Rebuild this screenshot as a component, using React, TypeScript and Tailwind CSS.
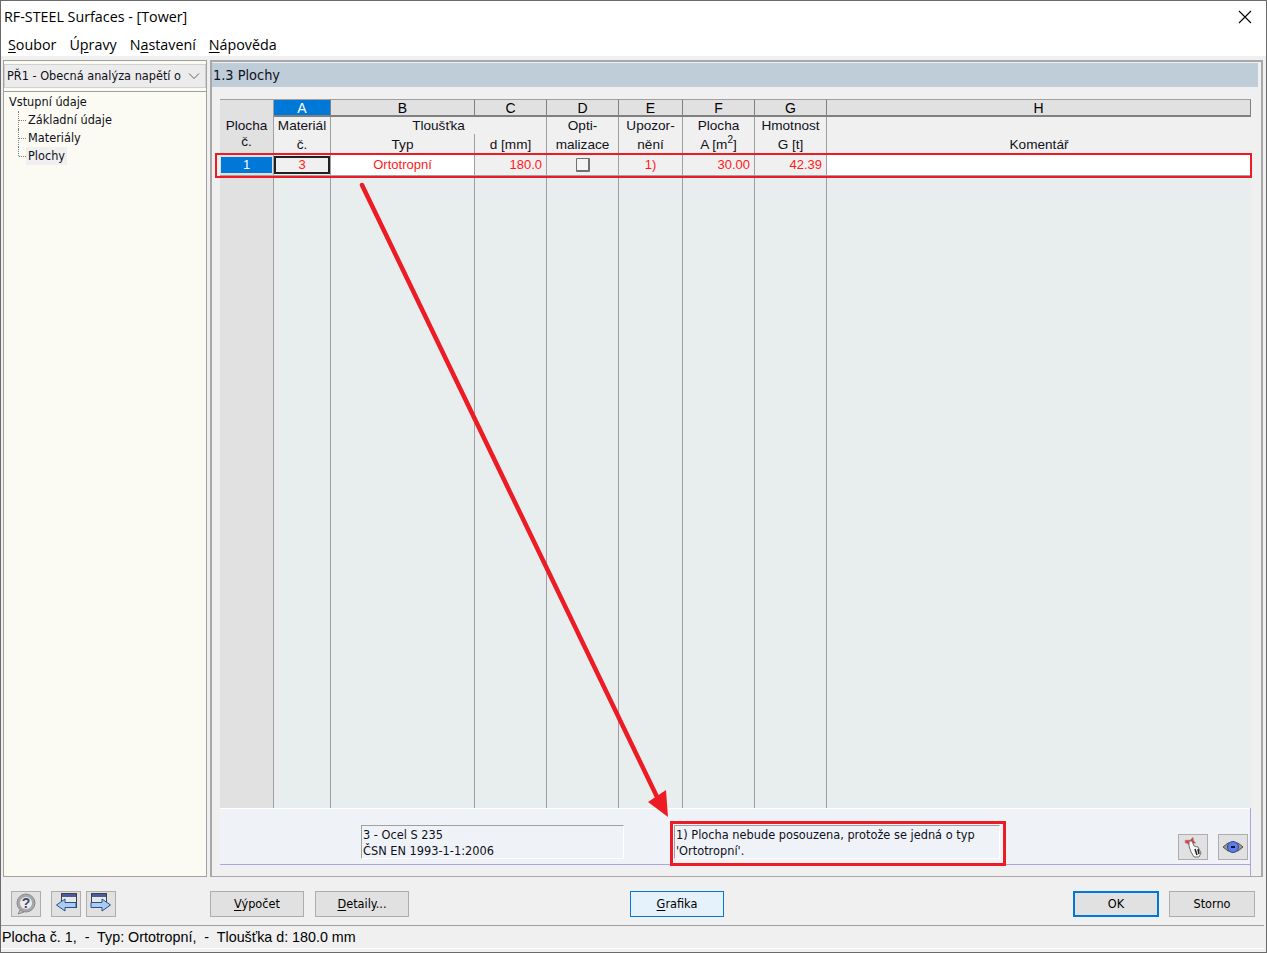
const A = "font-['Liberation_Sans',sans-serif]";
const T = "font-['DejaVu_Sans_Condensed','Noto_Sans',sans-serif]";
const cols = "grid-cols-[54px_57px_144px_72px_72px_64px_72px_72px_424px]";

function U({ children }: { children: string }) {
  return <span className="underline underline-offset-2">{children}</span>;
}

function Letter({ c, active }: { c: string; active?: boolean }) {
  return (
    <div className={`flex h-[18px] items-center justify-center border-t border-r border-b-2 border-t-[#a0a0a0] border-r-[#808080] border-b-[#808080] pt-[2px] text-[14px] ${active ? "bg-[#0078d7] text-white" : "bg-[#e1e1e1] text-black"}`}>
      {c}
    </div>
  );
}

function Head({ children, r = true, cls = "h-[17px]" }: { children?: React.ReactNode; r?: boolean; cls?: string }) {
  return (
    <div className={`flex items-center justify-center whitespace-nowrap bg-[#f0f0f0] pt-[2px] text-[13.6px] text-[#101020] ${r ? "border-r border-[#a0a0a0]" : ""} ${cls}`}>
      {children}
    </div>
  );
}

function Data({ children, cls = "", align = "justify-center" }: { children?: React.ReactNode; cls?: string; align?: string }) {
  return (
    <div className={`flex h-[21px] items-center border-r border-b border-[#a0a0a0] text-[13px] text-[#ff1a1a] ${align} ${cls}`}>
      {children}
    </div>
  );
}

function Btn({ children, cls = "w-[94px] border border-[#adadad] bg-[#e1e1e1]" }: { children: React.ReactNode; cls?: string }) {
  return (
    <div className={`flex h-[26px] items-center justify-center text-[12.6px] text-black ${T} ${cls}`}>
      {children}
    </div>
  );
}

function IconBtn({ children, cls = "" }: { children: React.ReactNode; cls?: string }) {
  return (
    <div className={`flex h-[26px] w-[30px] items-center justify-center border border-[#adadad] bg-[#e1e1e1] ${cls}`}>
      {children}
    </div>
  );
}

function WinArrow({ right }: { right?: boolean }) {
  return (
    <svg width="26" height="24" viewBox="0 0 26 24">
      <rect x={right ? 3.5 : 8.5} y="1.5" width="15" height="14" fill="#e8e8e8" stroke="#404040" />
      <rect x={right ? 4 : 9} y="2" width="14" height="3" fill="#4a5a9c" />
      {right ? (
        <path d="M3 10.500h11V7l8.500 6-8.500 6v-3.500H3z" fill="#a8ccf4" stroke="#2e4f86" />
      ) : (
        <path d="M23 10.500H12V7l-8.500 6 8.500 6v-3.500h11z" fill="#a8ccf4" stroke="#2e4f86" />
      )}
    </svg>
  );
}

function Info({ lines, w }: { lines: string[]; w: string }) {
  return (
    <div className={`flex h-[34px] flex-col justify-center border border-t-[#a0a0a0] border-l-[#a0a0a0] border-r-white border-b-white pl-px pt-[2px] text-[12.65px] leading-[16px] text-[#101020] ${T} ${w}`}>
      {lines.map((l) => (
        <div key={l} className="whitespace-nowrap">{l}</div>
      ))}
    </div>
  );
}

function TreeItem({ label, last, active }: { label: string; last?: boolean; active?: boolean }) {
  return (
    <div className="relative flex h-[18px] items-center pl-[22px]">
      <div className={`absolute left-[14px] top-0 w-0 border-l border-dotted border-[#808080] ${last ? "h-[9px]" : "h-[18px]"}`} />
      <div className="absolute left-[15px] top-[9px] h-0 w-[7px] border-t border-dotted border-[#808080]" />
      <span className={`flex h-[18px] items-center px-[2px] ${active ? "bg-[#f0f0f0]" : ""}`}>{label}</span>
    </div>
  );
}

export default function App() {
  return (
    <div className={`relative flex h-[953px] w-[1267px] flex-col overflow-hidden border border-[#6a6a6a] bg-[#f0f0f0] ${A}`}>
      <div className="flex h-[31px] shrink-0 items-center justify-between bg-white pl-[3px] pr-[14px]">
        <span className="font-['Open_Sans',sans-serif] text-[14.3px] text-black">RF-STEEL Surfaces - [Tower]</span>
        <svg width="14" height="14" viewBox="0 0 14 14"><path d="M1 1l12 12M13 1L1 13" stroke="#000" strokeWidth="1.1" /></svg>
      </div>
      <div className="flex h-[24px] shrink-0 items-center gap-[13px] bg-white pl-[7px] pt-[2px] font-['Open_Sans',sans-serif] text-[14.3px] text-black">
        <span><U>S</U>oubor</span>
        <span>Ú<U>p</U>ravy</span>
        <span>N<U>a</U>stavení</span>
        <span><U>N</U>ápověda</span>
      </div>

      <div className="mt-[4px] flex h-[817px] shrink-0 gap-[3px] pl-[2px] pr-[3px]">
        <div className={`flex w-[204px] shrink-0 flex-col border border-[#a0a0a0] bg-[#fbfbf3] pt-[3px] text-[12.6px] text-[#101020] ${T}`}>
          <div className="flex h-[24px] items-center justify-between border border-[#d0d0d0] bg-[#ececec] pl-[2px] pr-[5px]">
            <span className="whitespace-nowrap">PŘ1 - Obecná analýza napětí o</span>
            <svg width="12" height="8" viewBox="0 0 12 8"><path d="M1 1.500l5 5 5-5" fill="none" stroke="#606060" /></svg>
          </div>
          <div className="mt-[3px] border-t border-[#a0a0a0]" />
          <div className="mt-px flex h-[18px] items-center pl-[5px]">Vstupní údaje</div>
          <TreeItem label="Základní údaje" />
          <TreeItem label="Materiály" />
          <TreeItem label="Plochy" last active />
        </div>

        <div className="flex min-w-0 flex-1 flex-col border-2 border-b border-[#a8a8a8] pt-px">
          <div className={`ml-0 mr-[3px] flex h-[24px] shrink-0 items-center bg-[#bfcdd9] pl-px pt-px text-[14.4px] text-[#101020] ${T}`}>1.3 Plochy</div>
          <div className="ml-[8px] mr-[10px] mt-[12px] flex min-h-0 flex-1 flex-col border-r border-[#a6a6e6]">
            <div className={`grid shrink-0 ${cols}`}>
              <div className="h-[18px] border-t border-r border-[#a0a0a0] bg-[#e1e1e1]" />
              <Letter c="A" active />
              <Letter c="B" />
              <Letter c="C" />
              <Letter c="D" />
              <Letter c="E" />
              <Letter c="F" />
              <Letter c="G" />
              <Letter c="H" />
            </div>
            <div className={`grid shrink-0 ${cols}`}>
              <div className="row-span-2 flex flex-col items-center border-r border-[#a0a0a0] bg-[#e1e1e1] pt-px text-[13.6px] leading-[16px] text-[#101020]">
                <span>Plocha</span><span>č.</span>
              </div>
              <Head>Materiál</Head>
              <Head cls="col-span-2 h-[17px]">Tloušťka</Head>
              <Head>Opti-</Head>
              <Head>Upozor-</Head>
              <Head>Plocha</Head>
              <Head>Hmotnost</Head>
              <Head r={false} />
              <Head cls="h-[20px]">č.</Head>
              <Head cls="h-[20px]">Typ</Head>
              <Head cls="h-[20px]">d [mm]</Head>
              <Head cls="h-[20px]">malizace</Head>
              <Head cls="h-[20px]">nění</Head>
              <Head cls="h-[20px]">A [m<sup className="text-[10px] leading-none">2</sup>]</Head>
              <Head cls="h-[20px]">G [t]</Head>
              <Head cls="h-[20px]" r={false}>Komentář</Head>
            </div>
            <div className={`grid shrink-0 border-t border-[#a0a0a0] ${cols}`}>
              <div className="flex h-[21px] items-center border-r border-b border-[#a0a0a0] bg-[#e1e1e1] px-px pb-px">
                <div className="flex h-[16px] w-full items-center justify-center bg-[#0078d7] text-[13px] text-white">1</div>
              </div>
              <div className="flex h-[21px] items-center border-r border-b border-[#a0a0a0] bg-[#f0f0f0]">
                <div className="flex h-[18px] w-full items-center justify-center border-2 border-[#202020] text-[13px] text-[#ff1a1a]">3</div>
              </div>
              <Data cls="bg-white">Ortotropní</Data>
              <Data cls="bg-[#f0f0f0] pr-[4px]" align="justify-end">180.0</Data>
              <Data cls="bg-[#f0f0f0]">
                <div className="h-[14px] w-[14px] rounded-[1px] border border-r-2 border-b-2 border-[#707070] bg-[#f4f4f4]" />
              </Data>
              <Data cls="bg-[#f0f0f0]">1)</Data>
              <Data cls="bg-[#f0f0f0] pr-[4px]" align="justify-end">30.00</Data>
              <Data cls="bg-[#f0f0f0] pr-[4px]" align="justify-end">42.39</Data>
              <Data cls="bg-white" />
            </div>
            <div className={`grid min-h-0 flex-1 ${cols}`}>
              <div className="border-r border-[#a0a0a0] bg-[#e1e1e1]" />
              <div className="border-r border-[#a0a0a0] bg-[#e8eeee]" />
              <div className="border-r border-[#a0a0a0] bg-[#e8eeee]" />
              <div className="border-r border-[#a0a0a0] bg-[#e8eeee]" />
              <div className="border-r border-[#a0a0a0] bg-[#e8eeee]" />
              <div className="border-r border-[#a0a0a0] bg-[#e8eeee]" />
              <div className="border-r border-[#a0a0a0] bg-[#e8eeee]" />
              <div className="border-r border-[#a0a0a0] bg-[#e8eeee]" />
              <div className="bg-[#e8eeee]" />
            </div>
            <div className="flex h-[57px] shrink-0 items-end border-t border-b border-t-white border-b-[#a6a6e6] bg-[#eff3f8] pb-[5px]">
              <Info w="ml-[141px] w-[263px]" lines={["3 - Ocel S 235", "ČSN EN 1993-1-1:2006"]} />
              <Info w="ml-[50px] w-[326px]" lines={["1) Plocha nebude posouzena, protože se jedná o typ", "'Ortotropní'."]} />
              <IconBtn cls="ml-[178px] -mb-px">
                <svg width="26" height="24" viewBox="0 0 26 24">
                  <path d="M5 5l5 0 3-3 1 4 2 2-4 1-2 3-2-3-3-1z" fill="#e0404c" stroke="#c8a8a8" strokeWidth=".6" />
                  <path d="M9 6l3 0 2 5 4 1 3 6-2 4-5 0-3-5-2-6z" fill="#f8f8f8" stroke="#707070" />
                  <path d="M15 14l2 6M18 14l1 5" stroke="#202020" strokeWidth="1.500" />
                </svg>
              </IconBtn>
              <IconBtn cls="ml-[10px] -mb-px">
                <svg width="26" height="20" viewBox="0 0 26 20">
                  <path d="M3 10l5-4h10l5 4-5 4H8z" fill="#9a9a9a" stroke="#505050" />
                  <circle cx="13" cy="10" r="5.500" fill="#5b7fe8" stroke="#34458a" />
                  <rect x="11" y="9" width="4" height="2" fill="#101030" />
                </svg>
              </IconBtn>
            </div>
            <div className="h-[11px] shrink-0 bg-[#f0f0f0]" />
          </div>
        </div>
      </div>

      <div className="flex h-[48px] shrink-0 items-center pl-[10px] pr-[11px] pt-[6px]">
        <IconBtn>
          <svg width="26" height="24" viewBox="0 0 26 24">
            <circle cx="13" cy="11" r="9" fill="#a8a8ac" stroke="#8a8a8a" />
            <path d="M7 18l-2 4 6-2z" fill="#c8c8c8" stroke="#8a8a8a" />
            <circle cx="13" cy="11" r="6" fill="#ececec" />
            <text x="13" y="16" textAnchor="middle" fontSize="14" fontWeight="700" fill="#3c4a66" fontFamily="Liberation Sans">?</text>
          </svg>
        </IconBtn>
        <IconBtn cls="ml-[10px]"><WinArrow /></IconBtn>
        <IconBtn cls="ml-[5px]"><WinArrow right /></IconBtn>
        <Btn cls="ml-[94px] w-[94px] border border-[#adadad] bg-[#e1e1e1]"><span><U>V</U>ýpočet</span></Btn>
        <Btn cls="ml-[11px] w-[94px] border border-[#adadad] bg-[#e1e1e1]"><span><U>D</U>etaily...</span></Btn>
        <Btn cls="ml-[221px] w-[94px] border border-[#0078d7] bg-[#e5f1fb]"><span><U>G</U>rafika</span></Btn>
        <Btn cls="ml-auto w-[86px] border-2 border-[#0078d7] bg-[#e1e1e1]">OK</Btn>
        <Btn cls="ml-[10px] w-[86px] border border-[#adadad] bg-[#e1e1e1]">Storno</Btn>
      </div>

      <div className="mr-[2px] flex h-[24px] shrink-0 items-center border-t border-b border-t-[#a0a0a0] border-b-white pl-px pt-px text-[14.3px] whitespace-pre text-black">
        Plocha č. 1,  -  Typ: Ortotropní,  -  Tloušťka d: 180.0 mm
      </div>

      <div className="pointer-events-none absolute left-[214px] top-[152px] h-[25px] w-[1037px] border-2 border-[#ed1c24]" />
      <div className="pointer-events-none absolute left-[669px] top-[820px] h-[45px] w-[336px] border-[3px] border-[#ed1c24]" />
      <svg className="pointer-events-none absolute left-0 top-0" width="1267" height="953">
        <path d="M361 184L658 800" stroke="#ed1c24" strokeWidth="4.500" strokeLinecap="round" fill="none" />
        <path d="M667 816L665 789L647 801z" fill="#ed1c24" />
      </svg>
    </div>
  );
}
